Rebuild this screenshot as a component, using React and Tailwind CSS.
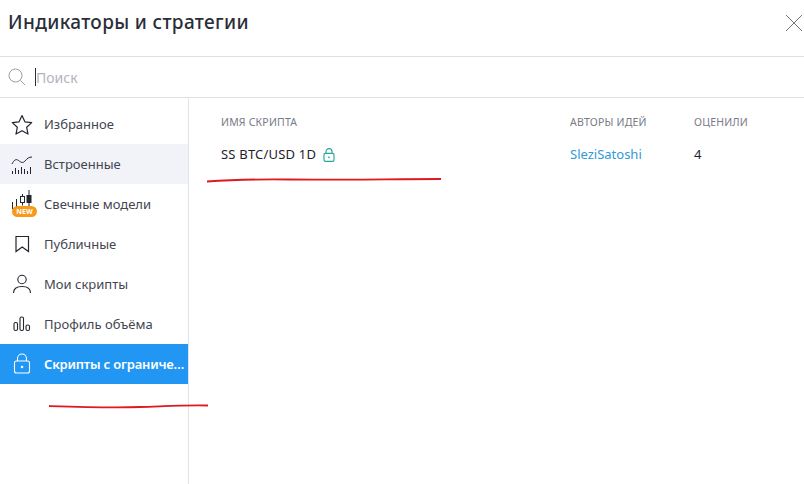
import React from 'react';

const font = "font-['Noto_Sans','Open_Sans',sans-serif]";

function StarIcon() {
  return (
    <svg width="22" height="21" viewBox="0 0 22 21" fill="none" stroke="#23262f" strokeWidth="1.2" strokeLinejoin="round">
      <path d="M11 1.500l2.900 6.300 6.800.8-5 4.700 1.300 6.800-6-3.400-6 3.400 1.300-6.800-5-4.700 6.800-.8z" />
    </svg>
  );
}

function BuiltinIcon() {
  return (
    <svg width="22" height="22" viewBox="0 0 22 22" fill="none" stroke="#23262f" strokeWidth="1">
      <path d="M1 11C3 7 5 5.500 7.500 7.500S12 10.500 14 8s4-4 7-4" />
      <path d="M1.500 21v-3M4.500 21v-6M7.500 21v-4M10.500 21v-7M13.500 21v-5M16.500 21v-3M19.500 21v-7" />
    </svg>
  );
}

function CandleIcon() {
  return (
    <div className="relative w-[28px] h-[28px] ml-[6px]">
      <svg width="28" height="28" viewBox="0 0 28 28" fill="none" stroke="#23262f" strokeWidth="1" className="absolute left-0 top-0">
        <path d="M1.500 12v7M5.500 9v12" />
        <rect x="9.500" y="6.500" width="4" height="6" />
        <path d="M11.500 4v2.500M11.500 12.500v3" />
        <rect x="16" y="5.500" width="4" height="7" fill="#23262f" />
        <path d="M18 0v5M18 12v4" />
      </svg>
      <span className="absolute left-[1px] top-[16px] w-[25px] h-[11px] rounded-full bg-[#f79a1b] text-white text-[7px] leading-[11px] font-bold text-center">NEW</span>
    </div>
  );
}

function BookmarkIcon() {
  return (
    <svg width="16" height="18" viewBox="0 0 16 18" fill="none" stroke="#23262f" strokeWidth="1.2">
      <path d="M2 1.500h12.500v15L8.200 12 2 16.500z" />
    </svg>
  );
}

function UserIcon() {
  return (
    <svg width="20" height="20" viewBox="0 0 20 20" fill="none" stroke="#23262f" strokeWidth="1.1">
      <circle cx="10" cy="5.500" r="4.200" />
      <path d="M1.500 19c0-4.500 3.500-6.500 8.500-6.500s8.500 2 8.500 6.500" />
    </svg>
  );
}

function VolumeIcon() {
  return (
    <svg width="18" height="16" viewBox="0 0 18 16" fill="none" stroke="#23262f" strokeWidth="1.1">
      <rect x="1" y="6.500" width="3.500" height="8" rx="1.500" />
      <rect x="7" y="1" width="3.500" height="13.500" rx="1.500" />
      <rect x="13" y="9" width="3.500" height="5.500" rx="1.500" />
    </svg>
  );
}

function LockIcon({ size = 18, color = '#fff', sw = 1.1 }) {
  return (
    <svg width={size} height={size * 1.17} viewBox="0 0 18 21" fill="none" stroke={color} strokeWidth={sw}>
      <rect x="1.500" y="8" width="15" height="12" rx="2" />
      <path d="M4.500 8V5.500a4.500 4.500 0 0 1 9 0V8" />
      <circle cx="9" cy="14" r="1.300" fill={color} stroke="none" />
    </svg>
  );
}

const items = [
  { label: 'Избранное', icon: <StarIcon /> },
  { label: 'Встроенные', icon: <BuiltinIcon />, hover: true },
  { label: 'Свечные модели', icon: <CandleIcon /> },
  { label: 'Публичные', icon: <BookmarkIcon /> },
  { label: 'Мои скрипты', icon: <UserIcon /> },
  { label: 'Профиль объёма', icon: <VolumeIcon /> },
  { label: 'Скрипты с ограничениями', icon: <LockIcon />, active: true },
];

export default function App() {
  return (
    <div className={`relative w-[804px] h-[484px] bg-white overflow-hidden flex flex-col text-[#434651] ${font}`}>
      {/* Header */}
      <div className="h-[57px] shrink-0 border-b border-[#e0e0e0] flex items-center justify-between pl-[8px] pr-[1px]">
        <h1 className="text-[19px] font-medium tracking-[0.35px] text-[#2a2e39] pb-[11px]">Индикаторы и стратегии</h1>
        <svg width="18" height="18" viewBox="0 0 18 18" stroke="#757575" strokeWidth="1" className="mb-[10px]">
          <path d="M1 1l16 16M17 1L1 17" />
        </svg>
      </div>

      {/* Search */}
      <div className="h-[41px] shrink-0 border-b border-[#e0e0e0] flex items-center pl-[8px]">
        <svg width="18" height="18" viewBox="0 0 18 18" fill="none" stroke="#9a9ea6" strokeWidth="1">
          <circle cx="7.500" cy="7.500" r="6.500" />
          <path d="M12.500 12.500l4.500 4.500" />
        </svg>
        <span className="ml-[9px] w-[1px] h-[18px] bg-[#2a2e39]" />
        <span className="text-[14px] text-[#b2b5be]">Поиск</span>
      </div>

      <div className="flex-1 flex min-h-0">
        {/* Sidebar */}
        <div className="w-[189px] shrink-0 border-r border-[#e0e3eb] pt-[6px]">
          {items.map((item) => (
            <div
              key={item.label}
              className={`h-[40px] flex items-center ${item.active ? 'bg-[#2196f3] text-white font-semibold tracking-[-0.2px]' : item.hover ? 'bg-[#f1f3f9]' : ''}`}
            >
              <div className="w-[44px] shrink-0 flex justify-center">{item.icon}</div>
              <span className="text-[13px] truncate pr-[2px] pt-[2px]">{item.label}</span>
            </div>
          ))}
        </div>

        {/* Table */}
        <div className="flex-1 pl-[32px] pt-[17px]">
          <div className="flex text-[10.5px] text-[#787b86] tracking-[0.2px] h-[16px] items-center">
            <div className="w-[349px]">ИМЯ СКРИПТА</div>
            <div className="w-[124px]">АВТОРЫ ИДЕЙ</div>
            <div>ОЦЕНИЛИ</div>
          </div>
          <div className="flex text-[13px] h-[20px] mt-[14px] items-center text-[#1e222d]">
            <div className="w-[349px] flex items-center gap-[7px]">
              <span className="tracking-[0.2px]">SS BTC/USD 1D</span>
              <LockIcon size={12} color="#26a69a" sw={1.7} />
            </div>
            <div className="w-[124px] text-[#2e9ad6]">SleziSatoshi</div>
            <div>4</div>
          </div>
        </div>
      </div>

      {/* Red marker strokes drawn over the screenshot */}
      <svg width="804" height="484" viewBox="0 0 804 484" fill="none" stroke="#e0181f" strokeWidth="1.8" className="absolute left-0 top-0 pointer-events-none">
        <path d="M207 181.500C235 179.500 250 179 290 179.500S400 179 441 179" />
        <path d="M49 406C80 407 110 408 140 407S185 405 208 405.500" />
      </svg>
    </div>
  );
}
